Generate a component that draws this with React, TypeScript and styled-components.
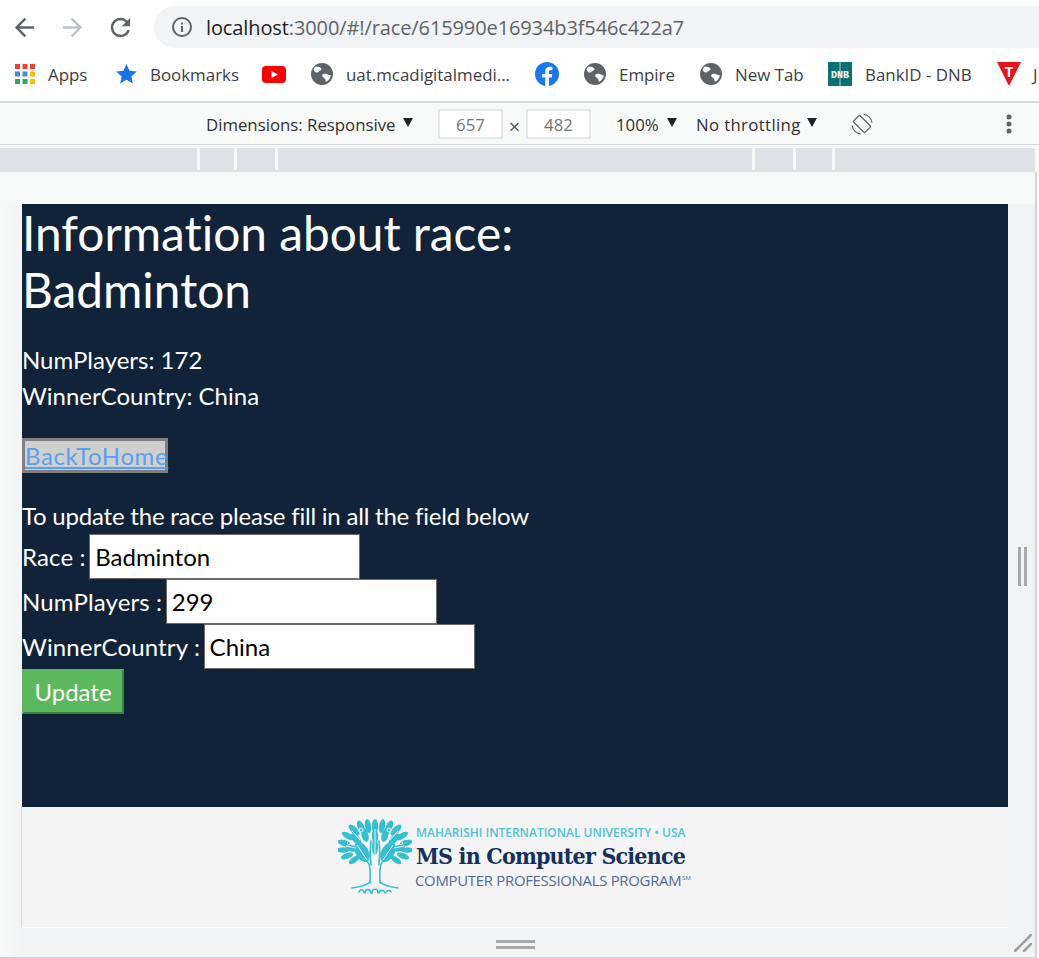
import React from "react";
import styled, { createGlobalStyle } from "styled-components";

const Global = createGlobalStyle`
  html, body { margin: 0; padding: 0; background: #fff; }
  * { box-sizing: border-box; }
`;

const Shell = styled.div`
  width: 1039px;
  height: 958px;
  overflow: hidden;
  display: flex;
  flex-direction: column;
  font-family: "Open Sans", "Liberation Sans", sans-serif;
  color: #3c4043;
  background: #fff;
`;

const TopBar = styled.div`
  height: 48px;
  display: flex;
  align-items: flex-end;
  flex: none;
`;
const NavGroup = styled.div`
  width: 154px;
  height: 42px;
  padding-left: 10px;
  display: flex;
  align-items: center;
  gap: 19px;
  svg { display: block; flex: none; }
`;
const UrlPill = styled.div`
  flex: 1;
  height: 42px;
  background: #f1f3f4;
  border-radius: 21px 0 0 21px;
  display: flex;
  align-items: center;
  padding-left: 17px;
  gap: 13px;
`;
const UrlText = styled.div`
  font-size: 20px;
  letter-spacing: -0.11px;
  color: #5f6368;
  white-space: nowrap;
  span { color: #202124; }
`;

const BookmarkBar = styled.div`
  height: 55px;
  padding: 0 0 1px 15px;
  border-bottom: 2px solid #d9dcdd;
  display: flex;
  align-items: center;
  flex: none;
  overflow: hidden;
  white-space: nowrap;
`;
const Bookmark = styled.div<{ $w: number }>`
  width: ${(p) => p.$w}px;
  flex: none;
  display: flex;
  align-items: center;
  gap: ${(p) => (p.$w < 40 ? 0 : 13)}px;
  svg { display: block; flex: none; }
`;
const BookmarkLabel = styled.span`
  font-size: 16.9px;
  color: #3c4043;
`;

const DeviceBar = styled.div`
  height: 42px;
  padding: 1px 0 0 206px;
  background: #f8f9f9;
  border-bottom: 1px solid #d5d7d8;
  display: flex;
  align-items: center;
  flex: none;
  font-size: 16.8px;
  color: #303030;
  white-space: nowrap;
`;
const DeviceLabel = styled.span<{ $w: number; $ml?: number; $ls?: number }>`
  width: ${(p) => p.$w}px;
  margin-left: ${(p) => p.$ml ?? 0}px;
  letter-spacing: ${(p) => p.$ls ?? 0}px;
  flex: none;
`;
const Caret = styled.i<{ $ml: number }>`
  width: 0;
  height: 0;
  margin: -3px 0 0 ${(p) => p.$ml}px;
  border-left: 5.5px solid transparent;
  border-right: 5.5px solid transparent;
  border-top: 9px solid #202124;
  flex: none;
`;
const SizeBox = styled.div<{ $ml: number }>`
  width: 65px;
  height: 30px;
  margin-left: ${(p) => p.$ml}px;
  flex: none;
  background: #fff;
  border: 2px solid #e5e7e7;
  display: flex;
  align-items: center;
  justify-content: center;
  color: #757575;
  font-size: 16.8px;
`;
const Times = styled.span`
  width: 23px;
  padding-top: 5px;
  text-align: center;
  flex: none;
  color: #555;
  font-size: 20px;
`;
const DeviceIcon = styled.svg<{ $ml: number }>`
  margin-left: ${(p) => p.$ml}px;
  flex: none;
  display: block;
`;

const RulerWrap = styled.div`
  height: 27px;
  padding: 3px 4px 0 0;
  background: #f8f9f9;
  flex: none;
`;
const Ruler = styled.div`
  height: 24px;
  background: #dee1e6;
  display: flex;
  align-items: flex-start;
`;
const RulerGap = styled.div<{ $ml: number }>`
  width: 3px;
  height: 22px;
  margin-left: ${(p) => p.$ml}px;
  background: #f8f9f9;
  flex: none;
`;

const Viewport = styled.div`
  flex: 1;
  min-height: 0;
  display: grid;
  grid-template-columns: 22px 986px 27px 4px;
  grid-template-rows: 32px 603px 120px 1px 1fr;
  background: #f1f3f5;
`;
const TopGutter = styled.div`
  grid-column: 1 / 4;
  grid-row: 1;
  background: #f8f9f9;
`;
const LeftGutter = styled.div`
  grid-column: 1;
  grid-row: 2 / 6;
  background: linear-gradient(90deg, #f9faf9, #f2f4f4);
  border-bottom: 1px solid #cfd8e0;
`;
const Page = styled.main`
  grid-column: 2;
  grid-row: 2;
  background: #102339;
  color: #fff;
  font-family: Lato, "Open Sans", sans-serif;
  font-size: 24px;
  line-height: 36px;
`;
const Title = styled.h1`
  margin: 0;
  font-size: 47.8px;
  font-weight: 400;
  line-height: 57px;
  font-variant-ligatures: none;
`;
const Stats = styled.div`
  margin-top: 24px;
`;
const StatLine = styled.div``;
const BackButton = styled.button`
  display: block;
  margin: 24px 0 25px;
  padding: 0;
  width: 146px;
  height: 35px;
  font: inherit;
  line-height: 29px;
  background: #cfcfcf;
  border: 3px solid #7f7f7f;
  cursor: pointer;
`;
const BackLink = styled.a`
  color: #5a9fef;
  letter-spacing: 0.6px;
  text-decoration: underline;
`;
const Hint = styled.div`
  height: 36px;
  line-height: 36px;
  letter-spacing: -0.21px;
`;
const FieldRow = styled.label`
  display: flex;
  align-items: center;
  height: 45px;
  gap: 3.5px;
  letter-spacing: 0.14px;
`;
const FieldInput = styled.input`
  width: 271px;
  height: 45px;
  flex: none;
  padding: 0 5px;
  font: inherit;
  letter-spacing: 0;
  color: #000;
  background: #fff;
  border: 1px solid #6a6a6a;
  border-radius: 0;
  outline: none;
`;
const UpdateButton = styled.button`
  display: block;
  width: 102px;
  height: 45px;
  padding: 0;
  font: inherit;
  line-height: 38px;
  color: #fff;
  background: #5cb85c;
  border: 2px solid #5cb85c;
  border-right-color: #3d7f3d;
  border-bottom-color: #3d7f3d;
`;

const Footer = styled.footer`
  grid-column: 2;
  grid-row: 3;
  background: #f4f4f5;
  box-shadow: -1px 0 0 #d8d8d8;
  padding: 12px 0 0 316px;
  display: flex;
  align-items: flex-start;
  gap: 4px;
`;
const LogoText = styled.div`
  display: flex;
  flex-direction: column;
  padding-top: 7px;
  white-space: nowrap;
`;
const LogoTop = styled.div`
  font-family: "Open Sans", sans-serif;
  font-size: 11.98px;
  font-weight: 600;
  line-height: 14px;
  color: #4cc3d6;
`;
const LogoMain = styled.div`
  margin-top: 4px;
  font-family: "DejaVu Serif Condensed", "DejaVu Serif", serif;
  font-size: 23px;
  font-weight: 700;
  line-height: 24px;
  letter-spacing: -0.82px;
  color: #14305e;
`;
const LogoSub = styled.div`
  margin-top: 4px;
  margin-left: -1px;
  font-family: "Open Sans", sans-serif;
  font-size: 14.9px;
  line-height: 17px;
  letter-spacing: -0.27px;
  color: #4f6a9a;
  sup {
    font-size: 6px;
    line-height: 0;
    vertical-align: 6px;
    margin-left: 1px;
  }
`;
const WhiteLine = styled.div`
  grid-column: 2;
  grid-row: 4;
  background: #fff;
  box-shadow: -1px 0 0 #d8d8d8;
`;
const BottomStrip = styled.div`
  grid-column: 2;
  grid-row: 5;
  display: flex;
  align-items: center;
  justify-content: center;
  padding-top: 4px;
  border-bottom: 1px solid #cfd8e0;
`;
const HandleH = styled.div`
  width: 39px;
  height: 9px;
  border-top: 3px solid #a8a8a8;
  border-bottom: 3px solid #a8a8a8;
`;
const RightStrip = styled.div`
  grid-column: 3;
  grid-row: 2 / 6;
  position: relative;
  display: flex;
  align-items: center;
  justify-content: center;
  padding: 0 0 29px 2px;
  border-bottom: 1px solid #cfd8e0;
`;
const HandleV = styled.div`
  width: 9px;
  height: 39px;
  border-left: 3px solid #a8a8a8;
  border-right: 3px solid #a8a8a8;
`;
const Grip = styled.svg`
  position: absolute;
  right: 3px;
  bottom: 5px;
  display: block;
`;
const RightEdge = styled.div`
  grid-column: 4;
  grid-row: 1 / 6;
  background: #fff;
  border-left: 2px solid #d2d4d6;
`;

const Globe = () => (
  <svg width="22" height="22" viewBox="0 0 22 22">
    <circle cx="11" cy="11" r="11" fill="#5f6368" />
    <path d="M5 3.500c2 .2 4 .6 5.200 2 .8 1-.4 2.200-1.600 2.400-1.300.3-1.600 1.600-3 1.600C4 9.500 3 8 2.600 6.500 3 5.300 4 4.300 5 3.500zM12.500 11c1.800-.5 3.800.2 5.500 1 .8.400 1.500.4 2 .2-.5 3-2.500 5.300-5 6.500-.7-1.200-.3-2.400-1.300-3.300-1-.9-2.300-1.100-2.500-2.400-.1-.9.500-1.700 1.300-2z" fill="#fff" />
  </svg>
);

const appColors = ["#ea4335", "#ea4335", "#ea4335", "#4285f4", "#4285f4", "#fbbc04", "#34a853", "#34a853", "#fbbc04"];
const AppsIcon = () => (
  <svg width="20" height="20" viewBox="0 0 20 20">
    {appColors.map((c, i) => (
      <rect key={i} x={(i % 3) * 7.5} y={Math.floor(i / 3) * 7.5} width="5" height="5" fill={c} />
    ))}
  </svg>
);

const leaves: [number, number, number, number, number][] = [
  [37, 7, 0, 3.2, 7], [30, 7, 350, 3, 7], [44, 7, 10, 3, 7], [23, 8, 335, 3.2, 7], [51, 8, 25, 3.2, 7],
  [16, 11, 315, 3.2, 7], [58, 11, 45, 3.2, 7], [10, 17, 300, 3, 7], [64, 17, 60, 3, 7],
  [6, 24, 285, 3, 6.5], [68, 24, 75, 3, 6.5], [5, 31, 270, 2.8, 6.5], [69, 31, 90, 2.8, 6.5], [9, 37, 250, 2.8, 6.5], [65, 37, 110, 2.8, 6.5],
  [16, 41, 235, 2.8, 6], [58, 41, 125, 2.8, 6],
  [27, 16, 345, 3.4, 7], [47, 16, 15, 3.4, 7], [37, 17, 0, 3.2, 7], [18, 20, 320, 3.4, 7], [56, 20, 40, 3.4, 7],
  [13, 29, 290, 3.2, 6], [61, 29, 70, 3.2, 6], [37, 28, 0, 3, 8],
];

const TreeLogo = () => (
  <svg width="74" height="76" viewBox="0 0 74 76" style={{ flex: "none" }}>
    <g fill="#35bfd2">
      {leaves.map(([x, y, r, rx, ry], i) => (
        <ellipse key={i} cx={x} cy={y} rx={rx} ry={ry} transform={`rotate(${r} ${x} ${y})`} />
      ))}
      <ellipse cx="24" cy="33" rx="6.500" ry="11" transform="rotate(-30 24 33)" />
      <ellipse cx="50" cy="33" rx="6.500" ry="11" transform="rotate(30 50 33)" />
    </g>
    <g fill="none" stroke="#f4f4f5" strokeWidth="1">
      <path d="M19 26l10 15M55 26L45 41M37 10v30M14 12l8 9M60 12l-8 9M8 27l10 2M66 27l-10 2" />
      <circle cx="23" cy="11" r="2" />
      <circle cx="51" cy="11" r="2" />
      <circle cx="11" cy="24" r="1.600" />
      <circle cx="63" cy="24" r="1.600" />
    </g>
    <g fill="none" stroke="#35bfd2" strokeWidth="1.600" strokeLinecap="round">
      <path d="M32 64c0-6 1-13-1-19-2-4-6-6-10-8M42 64c0-6-1-13 1-19 2-4 6-6 10-8" />
      <path d="M33 46c-1-8-1-16 0-24M41 46c1-8 1-16 0-24" />
      <path d="M32 63c-4 4-11 5-18 6M42 63c4 4 11 5 18 6" />
      <path d="M21 73c1-3 4-3 5 0M27 74c0-4 5-5 6 0M34 74c0-5 6-5 6 0M41 74c1-4 5-3 6 0M48 73c1-2 4-2 5 0" />
    </g>
  </svg>
);

const rulerGaps = [197, 34, 38, 474, 38, 36];

export default function App() {
  return (
    <Shell>
      <Global />
      <TopBar>
        <NavGroup>
          <svg width="29" height="29" viewBox="0 0 24 24" fill="#5f6368"><path d="M20 11H7.830l5.590-5.590L12 4l-8 8 8 8 1.410-1.410L7.830 13H20v-2z" /></svg>
          <svg width="29" height="29" viewBox="0 0 24 24" fill="#bdc1c6"><path d="M4 11h12.170l-5.590-5.590L12 4l8 8-8 8-1.410-1.410L16.170 13H4v-2z" /></svg>
          <svg width="29" height="29" viewBox="0 0 24 24" fill="#5f6368"><path d="M17.650 6.350C16.200 4.900 14.210 4 12 4c-4.420 0-7.990 3.580-7.990 8s3.570 8 7.990 8c3.730 0 6.840-2.550 7.730-6h-2.080c-.82 2.330-3.040 4-5.650 4-3.310 0-6-2.690-6-6s2.690-6 6-6c1.660 0 3.140.69 4.220 1.780L13 11h7V4l-2.350 2.350z" /></svg>
        </NavGroup>
        <UrlPill>
          <svg width="22" height="22" viewBox="0 0 22 22">
            <circle cx="11" cy="11" r="9" fill="none" stroke="#5f6368" strokeWidth="2" />
            <rect x="10" y="10" width="2" height="6" fill="#5f6368" />
            <rect x="10" y="6.500" width="2" height="2" fill="#5f6368" />
          </svg>
          <UrlText><span>localhost</span>:3000/#!/race/615990e16934b3f546c422a7</UrlText>
        </UrlPill>
      </TopBar>

      <BookmarkBar>
        <Bookmark $w={101}><AppsIcon /><BookmarkLabel>Apps</BookmarkLabel></Bookmark>
        <Bookmark $w={146}>
          <svg width="21" height="20" viewBox="0 0 21 20"><path d="M10.500 0l3 6.800 7.300.7-5.500 4.900 1.600 7.200-6.400-3.800-6.400 3.800 1.600-7.200L.2 7.500l7.300-.7z" fill="#1a73e8" /></svg>
          <BookmarkLabel>Bookmarks</BookmarkLabel>
        </Bookmark>
        <Bookmark $w={49}>
          <svg width="24" height="17" viewBox="0 0 24 17"><rect width="24" height="17" rx="4" fill="#f00" /><path d="M9.500 5l6.500 3.500L9.500 12z" fill="#fff" /></svg>
        </Bookmark>
        <Bookmark $w={224}><Globe /><BookmarkLabel>uat.mcadigitalmedi...</BookmarkLabel></Bookmark>
        <Bookmark $w={49}>
          <svg width="24" height="24" viewBox="0 0 24 24"><circle cx="12" cy="12" r="12" fill="#1877f2" /><path d="M16.700 15.500l.5-3.500h-3.300V9.800c0-1 .5-1.900 2-1.900h1.500v-3s-1.400-.2-2.700-.2c-2.700 0-4.500 1.600-4.500 4.600V12h-3v3.500h3v8.400a12 12 0 0 0 3.700 0v-8.400z" fill="#fff" /></svg>
        </Bookmark>
        <Bookmark $w={116}><Globe /><BookmarkLabel>Empire</BookmarkLabel></Bookmark>
        <Bookmark $w={128}><Globe /><BookmarkLabel>New Tab</BookmarkLabel></Bookmark>
        <Bookmark $w={169}>
          <svg width="24" height="24" viewBox="0 0 24 24">
            <rect width="24" height="24" fill="#0b7072" />
            <rect x="11" y="0" width="2" height="24" fill="#e8f3f3" opacity=".35" />
            <text x="12" y="16" textAnchor="middle" fontFamily="Liberation Mono, monospace" fontSize="10" fontWeight="700" fill="#fff">DNB</text>
          </svg>
          <BookmarkLabel>BankID - DNB</BookmarkLabel>
        </Bookmark>
        <Bookmark $w={36}>
          <svg width="24" height="24" viewBox="0 0 24 24">
            <path d="M0 0h24L12 24z" fill="#f0101c" />
            <text x="12" y="14.500" textAnchor="middle" fontFamily="Liberation Sans, sans-serif" fontSize="14" fontWeight="700" fill="#fff">T</text>
          </svg>
        </Bookmark>
        <BookmarkLabel>J</BookmarkLabel>
      </BookmarkBar>

      <DeviceBar>
        <DeviceLabel $w={189}>Dimensions: Responsive</DeviceLabel>
        <Caret $ml={8} />
        <SizeBox $ml={25}>657</SizeBox>
        <Times>×</Times>
        <SizeBox $ml={0}>482</SizeBox>
        <DeviceLabel $w={45} $ml={25}>100%</DeviceLabel>
        <Caret $ml={6} />
        <DeviceLabel $w={104} $ml={19} $ls={0.35}>No throttling</DeviceLabel>
        <Caret $ml={7} />
        <DeviceIcon $ml={34} width="22" height="22" viewBox="0 0 22 22" fill="none" stroke="#5f6368" strokeWidth="1.300">
          <rect x="6.500" y="3" width="9" height="16" rx="1" transform="rotate(-45 11 11)" />
          <path d="M12.500 1.100A10 10 0 0 1 20.900 9.500M9.500 20.900A10 10 0 0 1 1.100 12.500" />
        </DeviceIcon>
        <DeviceIcon $ml={133} width="6" height="20" viewBox="0 0 6 20" fill="#5f6368" stroke="none">
          <circle cx="3" cy="3" r="2.500" /><circle cx="3" cy="10" r="2.500" /><circle cx="3" cy="17" r="2.500" />
        </DeviceIcon>
      </DeviceBar>

      <RulerWrap>
        <Ruler>
          {rulerGaps.map((g, i) => <RulerGap key={i} $ml={g} />)}
        </Ruler>
      </RulerWrap>

      <Viewport>
        <TopGutter />
        <LeftGutter />
        <Page>
          <Title>Information about race:<br />Badminton</Title>
          <Stats>
            <StatLine>NumPlayers: 172</StatLine>
            <StatLine>WinnerCountry: China</StatLine>
          </Stats>
          <BackButton><BackLink>BackToHome</BackLink></BackButton>
          <Hint>To update the race please fill in all the field below</Hint>
          <FieldRow>Race : <FieldInput readOnly value="Badminton" /></FieldRow>
          <FieldRow>NumPlayers : <FieldInput readOnly value="299" /></FieldRow>
          <FieldRow>WinnerCountry : <FieldInput readOnly value="China" /></FieldRow>
          <UpdateButton>Update</UpdateButton>
        </Page>
        <Footer>
          <TreeLogo />
          <LogoText>
            <LogoTop>MAHARISHI INTERNATIONAL UNIVERSITY • USA</LogoTop>
            <LogoMain>MS in Computer Science</LogoMain>
            <LogoSub>COMPUTER PROFESSIONALS PROGRAM<sup>SM</sup></LogoSub>
          </LogoText>
        </Footer>
        <WhiteLine />
        <BottomStrip><HandleH /></BottomStrip>
        <RightStrip>
          <HandleV />
          <Grip width="18" height="18" viewBox="0 0 18 18" stroke="#a0a0a0" strokeWidth="2.500" strokeLinecap="round">
            <path d="M1 17L17 1M10 17l7-7" />
          </Grip>
        </RightStrip>
        <RightEdge />
      </Viewport>
    </Shell>
  );
}
